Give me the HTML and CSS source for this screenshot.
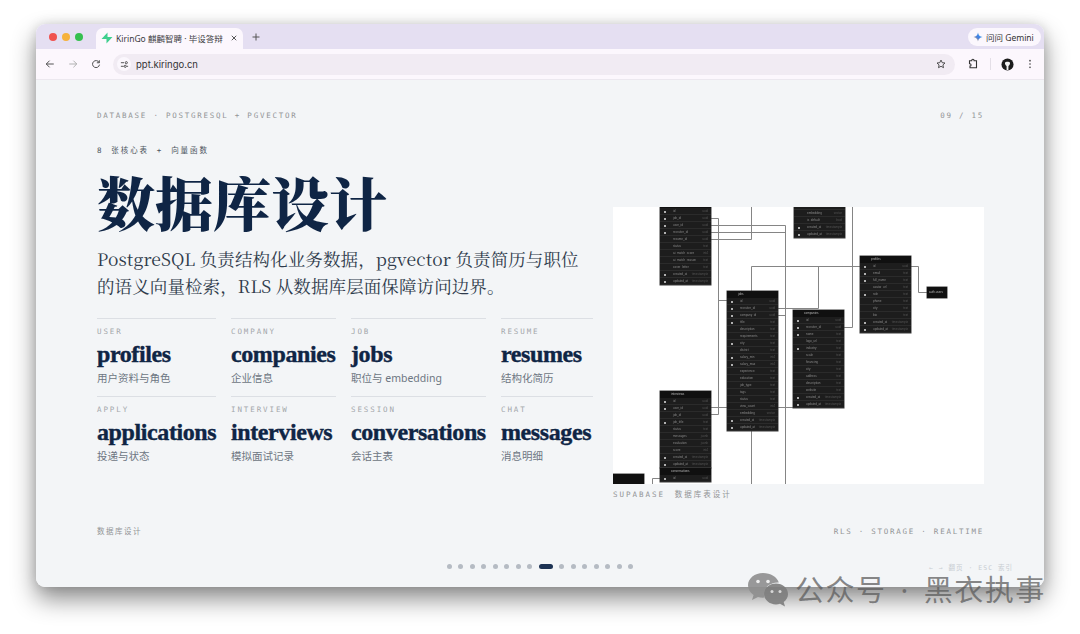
FILE: index.html
```html
<!DOCTYPE html>
<html lang="zh-CN">
<head>
    <meta charset="UTF-8">
    <meta name="viewport" content="width=device-width, initial-scale=1.0">
    <title>KirinGo 麒麟智聘 - 数据库设计</title>
    <link rel="stylesheet" href="styles.css">
</head>
<body>
    <div class="window">
        <div class="tabstrip">
            <div class="lights"><i class="red"></i><i class="amber"></i><i class="green"></i></div>
            <div class="tab">
                <svg class="favicon" viewBox="0 0 14 14"><path d="M7.6.6v5.2h5.8L6.4 13.4V8.2H.6z" fill="#3ecf8e"/></svg>
                <span class="tab-title">KirinGo 麒麟智聘 · 毕设答辩</span>
                <svg class="tab-close" viewBox="0 0 8 8"><path d="M1 1l6 6M7 1L1 7" stroke="#333" stroke-width="1.1" fill="none"/></svg>
            </div>
            <svg class="new-tab" viewBox="0 0 8 8"><path d="M4 .5v7M.5 4h7" stroke="#555" stroke-width="1" fill="none"/></svg>
            <div class="gemini">
                <svg viewBox="0 0 12 12">
                    <defs><linearGradient id="gem" x1="0" y1="1" x2="1" y2="0"><stop offset="0" stop-color="#e8a33d"/><stop offset=".5" stop-color="#3f7fe8"/><stop offset="1" stop-color="#45b8e0"/></linearGradient></defs>
                    <path d="M6 .5C6.4 3.600 8.400 5.600 11.500 6 8.400 6.400 6.400 8.400 6 11.500 5.600 8.400 3.600 6.400.5 6 3.600 5.600 5.600 3.600 6 .5z" fill="url(#gem)"/>
                </svg>
                <span>问问 Gemini</span>
            </div>
        </div>

        <div class="toolbar">
            <svg class="tool" viewBox="0 0 12 12"><path d="M10.500 6h-9M5.500 2l-4 4 4 4" stroke="#444" stroke-width="1.100" fill="none"/></svg>
            <svg class="tool" viewBox="0 0 12 12"><path d="M1.500 6h9M6.500 2l4 4-4 4" stroke="#aaa" stroke-width="1.100" fill="none"/></svg>
            <svg class="tool" viewBox="0 0 12 12"><path d="M9.800 4.200A4.200 4.200 0 1 0 10.200 6.800M10 1.500v3H7" stroke="#444" stroke-width="1.100" fill="none"/></svg>
            <div class="omnibox">
                <span class="site-info">
                    <svg viewBox="0 0 10 10"><path d="M1 3h3.500M7.500 7H9M1 7h3" stroke="#333" stroke-width=".9" fill="none"/><circle cx="7" cy="3" r="1.200" fill="none" stroke="#333" stroke-width=".9"/><circle cx="5.800" cy="7" r="1.200" fill="none" stroke="#333" stroke-width=".9"/></svg>
                </span>
                <span class="url">ppt.kiringo.cn</span>
                <svg class="star" viewBox="0 0 12 12"><path d="M6 1.300l1.450 3.100 3.350.4-2.500 2.300.7 3.300L6 8.750 3 10.400l.7-3.300-2.500-2.300 3.350-.4z" stroke="#333" stroke-width="1" fill="none"/></svg>
            </div>
            <svg class="tool puzzle" viewBox="0 0 12 12"><path d="M2.500 2.800h2.200c0-2 2.400-2 2.400 0h2.400v7H3V8c1.400 0 1.400-2.200 0-2.200H2.500z" stroke="#333" stroke-width="1.100" fill="none"/></svg>
            <span class="divider"></span>
            <svg class="avatar" viewBox="0 0 14 14"><circle cx="7" cy="7" r="6.500" fill="#1c1c1c"/><path d="M4.300 5.200C5 3.800 9 3.800 9.700 5.200 10 7 8.800 8 8 8.600V13H6V8.600C5.200 8 4 7 4.300 5.200z" fill="#f2f2f2"/></svg>
            <svg class="tool kebab" viewBox="0 0 4 12"><circle cx="2" cy="2" r="1" fill="#444"/><circle cx="2" cy="6" r="1" fill="#444"/><circle cx="2" cy="10" r="1" fill="#444"/></svg>
        </div>

        <div class="slide">
            <div class="slide-head">
                <span>DATABASE · POSTGRESQL + PGVECTOR</span>
                <span>09 / 15</span>
            </div>

            <div class="slide-main">
                <div class="intro">
                    <p class="eyebrow">8 张核心表 + 向量函数</p>
                    <h1>数据库设计</h1>
                    <p class="lead">PostgreSQL 负责结构化业务数据，pgvector 负责简历与职位的语义向量检索，RLS 从数据库层面保障访问边界。</p>
                    <div class="stats">
                        <div class="stat"><span class="stat-label">USER</span><strong>profiles</strong><span class="stat-desc">用户资料与角色</span></div>
                        <div class="stat"><span class="stat-label">COMPANY</span><strong>companies</strong><span class="stat-desc">企业信息</span></div>
                        <div class="stat"><span class="stat-label">JOB</span><strong>jobs</strong><span class="stat-desc">职位与 embedding</span></div>
                        <div class="stat"><span class="stat-label">RESUME</span><strong>resumes</strong><span class="stat-desc">结构化简历</span></div>
                        <div class="stat"><span class="stat-label">APPLY</span><strong>applications</strong><span class="stat-desc">投递与状态</span></div>
                        <div class="stat"><span class="stat-label">INTERVIEW</span><strong>interviews</strong><span class="stat-desc">模拟面试记录</span></div>
                        <div class="stat"><span class="stat-label">SESSION</span><strong>conversations</strong><span class="stat-desc">会话主表</span></div>
                        <div class="stat"><span class="stat-label">CHAT</span><strong>messages</strong><span class="stat-desc">消息明细</span></div>
                    </div>
                </div>

                <figure class="schema">
                    <div class="diagram">
                        <svg class="links" viewBox="0 0 371 277">
                            <path d="M98 11.500h7.500V207.500H98M105 93.500h9M98 200.500h16"/>
                            <path d="M98 18.500h74.500V277M98 25.500h74.500M164 108.500h8"/>
                            <path d="M98 32.500h40.500V0"/>
                            <path d="M138.500 84V59.500H247"/>
                            <path d="M164 101.500h41.500V59.500"/>
                            <path d="M239.500 0V120.500H231"/>
                            <path d="M297 59.500h8.500V85.500H314"/>
                            <path d="M138.500 224V277"/>
                            <path d="M164 200.500h16"/>
                            <path d="M47 271.500h-7.500V277"/>
                        </svg>

                        <div class="er-table t-applications">
                            <div class="er-head"></div>
                            <div class="er-row key"><span>id</span><em>uuid</em></div>
                            <div class="er-row key"><span>job_id</span><em>uuid</em></div>
                            <div class="er-row key"><span>user_id</span><em>uuid</em></div>
                            <div class="er-row key"><span>recruiter_id</span><em>uuid</em></div>
                            <div class="er-row"><span>resume_id</span><em>uuid</em></div>
                            <div class="er-row"><span>status</span><em>text</em></div>
                            <div class="er-row"><span>ai_match_score</span><em>int4</em></div>
                            <div class="er-row"><span>ai_match_reason</span><em>text</em></div>
                            <div class="er-row"><span>cover_letter</span><em>text</em></div>
                            <div class="er-row key"><span>created_at</span><em>timestamptz</em></div>
                            <div class="er-row key"><span>updated_at</span><em>timestamptz</em></div>
                        </div>

                        <div class="er-table t-resumes">
                            <div class="er-row"></div>
                            <div class="er-row"><span>embedding</span><em>vector</em></div>
                            <div class="er-row"><span>is_default</span><em>bool</em></div>
                            <div class="er-row key"><span>created_at</span><em>timestamptz</em></div>
                            <div class="er-row key"><span>updated_at</span><em>timestamptz</em></div>
                        </div>

                        <div class="er-table t-jobs">
                            <div class="er-head">jobs</div>
                            <div class="er-row key"><span>id</span><em>uuid</em></div>
                            <div class="er-row key"><span>recruiter_id</span><em>uuid</em></div>
                            <div class="er-row key"><span>company_id</span><em>uuid</em></div>
                            <div class="er-row key"><span>title</span><em>text</em></div>
                            <div class="er-row"><span>description</span><em>text</em></div>
                            <div class="er-row"><span>requirements</span><em>text</em></div>
                            <div class="er-row key"><span>city</span><em>text</em></div>
                            <div class="er-row"><span>district</span><em>text</em></div>
                            <div class="er-row key"><span>salary_min</span><em>int4</em></div>
                            <div class="er-row key"><span>salary_max</span><em>int4</em></div>
                            <div class="er-row"><span>experience</span><em>text</em></div>
                            <div class="er-row"><span>education</span><em>text</em></div>
                            <div class="er-row"><span>job_type</span><em>text</em></div>
                            <div class="er-row"><span>tags</span><em>text</em></div>
                            <div class="er-row"><span>status</span><em>text</em></div>
                            <div class="er-row"><span>view_count</span><em>int4</em></div>
                            <div class="er-row"><span>embedding</span><em>vector</em></div>
                            <div class="er-row key"><span>created_at</span><em>timestamptz</em></div>
                            <div class="er-row key"><span>updated_at</span><em>timestamptz</em></div>
                        </div>

                        <div class="er-table t-companies">
                            <div class="er-head">companies</div>
                            <div class="er-row key"><span>id</span><em>uuid</em></div>
                            <div class="er-row key"><span>recruiter_id</span><em>uuid</em></div>
                            <div class="er-row key"><span>name</span><em>text</em></div>
                            <div class="er-row"><span>logo_url</span><em>text</em></div>
                            <div class="er-row key"><span>industry</span><em>text</em></div>
                            <div class="er-row"><span>scale</span><em>text</em></div>
                            <div class="er-row"><span>financing</span><em>text</em></div>
                            <div class="er-row"><span>city</span><em>text</em></div>
                            <div class="er-row"><span>address</span><em>text</em></div>
                            <div class="er-row"><span>description</span><em>text</em></div>
                            <div class="er-row"><span>website</span><em>text</em></div>
                            <div class="er-row key"><span>created_at</span><em>timestamptz</em></div>
                            <div class="er-row key"><span>updated_at</span><em>timestamptz</em></div>
                        </div>

                        <div class="er-table t-profiles">
                            <div class="er-head">profiles</div>
                            <div class="er-row key"><span>id</span><em>uuid</em></div>
                            <div class="er-row key"><span>email</span><em>text</em></div>
                            <div class="er-row key"><span>full_name</span><em>text</em></div>
                            <div class="er-row"><span>avatar_url</span><em>text</em></div>
                            <div class="er-row key"><span>role</span><em>text</em></div>
                            <div class="er-row"><span>phone</span><em>text</em></div>
                            <div class="er-row"><span>city</span><em>text</em></div>
                            <div class="er-row"><span>bio</span><em>text</em></div>
                            <div class="er-row key"><span>created_at</span><em>timestamptz</em></div>
                            <div class="er-row key"><span>updated_at</span><em>timestamptz</em></div>
                        </div>

                        <div class="er-table t-auth"><div class="er-head">auth.users</div></div>

                        <div class="er-table t-interviews">
                            <div class="er-head">interviews</div>
                            <div class="er-row key"><span>id</span><em>uuid</em></div>
                            <div class="er-row key"><span>user_id</span><em>uuid</em></div>
                            <div class="er-row"><span>job_id</span><em>uuid</em></div>
                            <div class="er-row key"><span>job_title</span><em>text</em></div>
                            <div class="er-row"><span>status</span><em>text</em></div>
                            <div class="er-row"><span>messages</span><em>jsonb</em></div>
                            <div class="er-row"><span>evaluation</span><em>jsonb</em></div>
                            <div class="er-row"><span>score</span><em>int4</em></div>
                            <div class="er-row key"><span>created_at</span><em>timestamptz</em></div>
                            <div class="er-row key"><span>updated_at</span><em>timestamptz</em></div>
                        </div>

                        <div class="er-table t-conversations">
                            <div class="er-head">conversations</div>
                            <div class="er-row key"><span>id</span><em>uuid</em></div>
                        </div>

                        <div class="er-table t-messages"><div class="er-head"></div></div>
                    </div>
                    <figcaption>SUPABASE 数据库表设计</figcaption>
                </figure>
            </div>

            <div class="slide-foot">
                <span class="foot-title">数据库设计</span>
                <span>RLS · STORAGE · REALTIME</span>
            </div>

            <div class="pager">
                <i></i><i></i><i></i><i></i><i></i><i></i><i></i><i></i>
                <i class="active"></i>
                <i></i><i></i><i></i><i></i><i></i><i></i><i></i>
                <span class="pager-hint">← → 翻页 · ESC 索引</span>
            </div>
        </div>
    </div>

    <div class="watermark">
        <svg viewBox="0 0 42 36">
            <path d="M16 1C7.700 1 1 6.500 1 13.300c0 3.900 2.200 7.300 5.600 9.600L5 28l6-3c1.600.400 3.300.7 5 .7.500 0 1 0 1.500-.1-.4-1.200-.6-2.400-.6-3.700C16.900 15.700 23 10.500 30.700 10.500c.4 0 .7 0 1.100 0C30.100 5 23.700 1 16 1z" fill="#8f8f8f"/>
            <path d="M41 22c0-5.800-5.500-10.400-12-10.400S17 16.200 17 22s5.500 10.400 12 10.400c1.400 0 2.800-.2 4-.6l5 2.700-1.300-4.400C39.300 28.300 41 25.300 41 22z" fill="#7d7d7d"/>
            <circle cx="11" cy="9.500" r="1.800" fill="#eee"/><circle cx="21" cy="9.500" r="1.800" fill="#eee"/>
            <circle cx="25" cy="19.500" r="1.500" fill="#ddd"/><circle cx="33" cy="19.500" r="1.500" fill="#ddd"/>
        </svg>
        <span>公众号 · 黑衣执事</span>
    </div>
</body>
</html>
```

FILE: styles.css
```css
* {
    box-sizing: border-box;
}
html, body {
    height: 100%;
}
body {
    margin: 0;
    padding: 24px 36px 0;
    overflow: hidden;
    background-color: #fff;
    font-family: 'Noto Sans', 'Noto Sans CJK SC', sans-serif;
}

/* fenetre du navigateur */
.window {
    display: flex;
    flex-direction: column;
    height: 563px;
    border-radius: 9px;
    overflow: hidden;
    box-shadow: 0 12px 24px rgba(0, 0, 0, 0.45), 0 0 12px rgba(0, 0, 0, 0.12);
}
.tabstrip {
    display: flex;
    align-items: flex-end;
    height: 25px;
    padding-left: 13px;
    background-color: #e5dff2;
}
.lights {
    display: flex;
    gap: 5px;
    align-self: flex-start;
    margin-top: 9px;
}
.lights i {
    width: 8px;
    height: 8px;
    border-radius: 50%;
}
.lights .red { background-color: #f0524f; }
.lights .amber { background-color: #f6b23c; }
.lights .green { background-color: #35c04f; }
.tab {
    display: flex;
    align-items: center;
    width: 147px;
    height: 21px;
    margin-left: 13px;
    padding: 0 6px 2px 5px;
    border-radius: 7px 7px 0 0;
    background-color: #fcf7fd;
    font-size: 8.500px;
    color: #3b3b3f;
}
.favicon {
    width: 12px;
    height: 12px;
    margin-right: 3px;
}
.tab-title {
    flex: 1;
    white-space: nowrap;
}
.tab-close {
    width: 6px;
    height: 6px;
}
.new-tab {
    width: 8px;
    height: 8px;
    margin: 0 0 8px 9px;
}
.gemini {
    display: flex;
    align-items: center;
    gap: 3px;
    align-self: flex-start;
    width: 73px;
    height: 18px;
    margin: 4px 3px 0 auto;
    padding-left: 5px;
    border-radius: 9px;
    background-color: #fbf7fd;
    font-size: 8.500px;
    color: #333;
}
.gemini svg {
    width: 10px;
    height: 10px;
}
.toolbar {
    display: flex;
    align-items: center;
    height: 31px;
    padding: 0 10px 0 9px;
    background-color: #fcf7fd;
    border-bottom: 1px solid #ece8ef;
}
.tool {
    width: 10px;
    height: 10px;
    margin-right: 13px;
}
.omnibox {
    display: flex;
    align-items: center;
    width: 842px;
    height: 21px;
    margin-left: -1px;
    padding: 0 9px 0 4px;
    border-radius: 11px;
    background-color: #f1ebf3;
}
.site-info {
    display: flex;
    align-items: center;
    justify-content: center;
    width: 14px;
    height: 14px;
    border-radius: 50%;
    background-color: #fbf7fd;
}
.site-info svg {
    width: 9px;
    height: 9px;
}
.url {
    flex: 1;
    margin-left: 5px;
    font-family: 'Inter', sans-serif;
    font-size: 9.500px;
    color: #333;
}
.star {
    width: 10px;
    height: 10px;
}
.puzzle {
    width: 12px;
    height: 12px;
    margin: 0 11px 0 12px;
}
.divider {
    width: 1px;
    height: 12px;
    margin-right: 10px;
    background-color: #e4dfe7;
}
.avatar {
    width: 13px;
    height: 13px;
    margin-right: 14px;
}
.kebab {
    width: 4px;
    margin: 0;
}

/* la diapositive */
.slide {
    position: relative;
    flex: 1;
    padding: 30px 60px 0 61px;
    background-color: #f3f5f7;
}
.slide-head, .slide-foot {
    display: flex;
    justify-content: space-between;
    height: 12px;
    font-family: 'DejaVu Sans Mono', 'Noto Sans CJK SC', monospace;
    font-size: 7.500px;
    line-height: 12px;
    letter-spacing: 1.750px;
    color: #929496;
}
.slide-main {
    display: grid;
    grid-template-columns: 496px 371px;
    gap: 20px;
    height: 361px;
    margin-top: 23px;
}
.eyebrow {
    margin: 0;
    height: 12px;
    font-family: 'DejaVu Sans Mono', 'Noto Sans CJK SC', monospace;
    font-size: 7.500px;
    line-height: 12px;
    letter-spacing: 1.900px;
    word-spacing: 1.500px;
    color: #4d5560;
}
h1 {
    margin: 9px 0 0;
    font-family: 'Noto Serif CJK SC', 'Noto Sans CJK SC', serif;
    font-size: 58px;
    font-weight: 900;
    line-height: 70px;
    color: #0f2545;
}
.lead {
    width: 490px;
    margin: 9px 0 0;
    font-family: 'Noto Serif CJK SC', 'Liberation Serif', 'Noto Sans CJK SC', serif;
    font-size: 17.500px;
    line-height: 27px;
    letter-spacing: 0.100px;
    color: #2f3b4b;
}
.stats {
    display: grid;
    grid-template-columns: 119px 105px 135px 92px;
    column-gap: 15px;
    margin-top: 19px;
}
.stat {
    display: flex;
    flex-direction: column;
    height: 78px;
    padding-top: 8px;
    border-top: 1px solid #dcdfe4;
}
.stat-label {
    height: 10px;
    font-family: 'DejaVu Sans Mono', monospace;
    font-size: 7.500px;
    line-height: 10px;
    letter-spacing: 1.900px;
    color: #a3a7ab;
}
.stat strong {
    height: 30px;
    margin-top: 2px;
    font-family: 'Liberation Serif', serif;
    font-size: 24px;
    font-weight: 700;
    line-height: 30px;
    letter-spacing: -0.400px;
    -webkit-text-stroke: 0.400px #0f2545;
    color: #0f2545;
    white-space: nowrap;
}
.stat-desc {
    margin-top: 1px;
    font-size: 10.500px;
    line-height: 16px;
    color: #6d7682;
}
.schema {
    margin: 62px 0 0;
}
.diagram {
    position: relative;
    width: 371px;
    height: 277px;
    overflow: hidden;
    background-color: #fff;
}
.schema figcaption {
    margin-top: 5px;
    font-family: 'DejaVu Sans Mono', 'Noto Sans CJK SC', monospace;
    font-size: 7.500px;
    line-height: 12px;
    letter-spacing: 2px;
    word-spacing: 3px;
    color: #929496;
}

/* schema supabase */
.links {
    position: absolute;
    left: 0;
    top: 0;
    width: 371px;
    height: 277px;
    fill: none;
    stroke: #858585;
    stroke-width: 1;
}
.er-table {
    position: absolute;
    width: 51px;
    background-color: #1d1d1d;
    box-shadow: 0 0 0 0.500px #3a3a3a;
    font-family: 'Liberation Sans', sans-serif;
    font-size: 3px;
    color: #8a8a8a;
    filter: blur(0.3px);
}
.er-head {
    height: 7px;
    padding-left: 11px;
    line-height: 7px;
    background-color: #101010;
    color: #b5b5b5;
}
.er-row {
    position: relative;
    display: flex;
    justify-content: space-between;
    height: 7px;
    padding: 0 3px 0 13px;
    line-height: 7px;
    border-bottom: 0.500px solid #2b2b2b;
}
.er-row em {
    font-style: normal;
    color: #555;
}
.er-row.key::before {
    content: "";
    position: absolute;
    left: 4px;
    top: 2.500px;
    width: 2px;
    height: 2px;
    background-color: #b0b0b0;
}
.t-applications { left: 47px; top: -6px; }
.t-resumes { left: 181px; top: -4px; }
.t-jobs { left: 114px; top: 84px; }
.t-companies { left: 180px; top: 103px; }
.t-profiles { left: 247px; top: 49px; }
.t-auth { left: 314px; top: 80px; width: 20px; }
.t-auth .er-head { height: 11px; padding-left: 2px; line-height: 11px; }
.t-interviews { left: 47px; top: 184px; }
.t-conversations { left: 47px; top: 261px; }
.t-messages { left: 0; top: 267px; width: 31px; }
.t-messages .er-head { height: 10px; }

.slide-foot {
    margin-top: 20px;
}
.foot-title {
    letter-spacing: 1.500px;
}
.pager {
    display: flex;
    align-items: center;
    justify-content: center;
    gap: 6.500px;
    height: 8px;
    margin: 24px 0 0 -1px;
}
.pager i {
    width: 5px;
    height: 5px;
    border-radius: 50%;
    background-color: #b5bbc3;
}
.pager .active {
    width: 14px;
    border-radius: 3px;
    background-color: #1d3354;
}
.pager-hint {
    position: absolute;
    right: 31px;
    bottom: 15px;
    font-family: 'DejaVu Sans Mono', 'Noto Sans CJK SC', monospace;
    font-size: 6.500px;
    letter-spacing: 1px;
    color: #c8cdd2;
}

/* filigrane par-dessus la capture */
.watermark {
    position: absolute;
    left: 747px;
    top: 572px;
    display: flex;
    align-items: center;
    gap: 6px;
    color: rgba(90, 90, 90, 0.72);
    font-size: 29px;
    line-height: 36px;
    letter-spacing: 1.500px;
    word-spacing: 5px;
    white-space: nowrap;
}
.watermark svg {
    width: 42px;
    height: 36px;
    opacity: 0.9;
}
```
